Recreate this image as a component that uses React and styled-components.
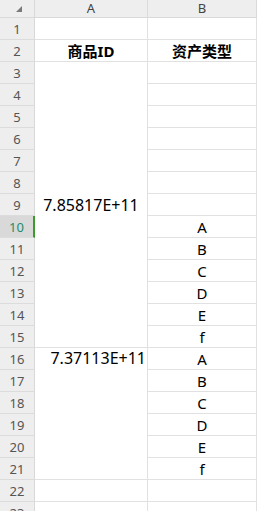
import React from "react";
import styled, { createGlobalStyle } from "styled-components";

const Global = createGlobalStyle`
  html, body { margin: 0; padding: 0; background: #fff; overflow: hidden; }
  body { font-family: "Noto Sans", "Noto Sans CJK SC", sans-serif; }
`;

const Sheet = styled.div`
  display: grid;
  grid-template-columns: 35px 113px 1fr;
  grid-template-rows: 18px repeat(23, 22px);
  width: 257px;
  height: 511px;
  overflow: hidden;
  background: #fff;
`;

const Corner = styled.div`
  background: #eeeeee;
  border-right: 1px solid #d9d9d9;
  border-bottom: 1px solid #d9d9d9;
  position: relative;
`;

const CornerMark = styled.div`
  position: absolute;
  left: 16px;
  top: 6px;
  width: 0;
  height: 0;
  border-left: 6px solid transparent;
  border-bottom: 6px solid #7a7a7a;
`;

const ColHead = styled.div`
  background: #eeeeee;
  border-right: 1px solid #dadada;
  border-bottom: 1px solid #d9d9d9;
  display: flex;
  align-items: center;
  justify-content: center;
  font-size: 13px;
  color: #444;
  line-height: 1;
`;

const RowHead = styled.div`
  background: ${(p) => (p.$active ? "#d9d9d9" : "#eeeeee")};
  color: ${(p) => (p.$active ? "#1e8c6b" : "#555")};
  border-right: ${(p) => (p.$active ? "2px solid #3c9b2a" : "1px solid #d9d9d9")};
  border-bottom: 1px solid #dcdcdc;
  display: flex;
  align-items: center;
  justify-content: center;
  font-size: 13px;
  box-sizing: border-box;
`;

const Cell = styled.div`
  border-right: 1px solid #e1e1e1;
  border-bottom: 1px solid #e1e1e1;
  display: flex;
  align-items: ${(p) => p.$valign || "center"};
  justify-content: ${(p) => p.$align || "center"};
  padding: ${(p) => p.$pad || "0"};
  font-size: ${(p) => (p.$num ? "16px" : "15px")};
  font-weight: ${(p) => (p.$bold ? 700 : 400)};
  color: #000;
  white-space: nowrap;
  overflow: hidden;
  box-sizing: border-box;
  grid-column: ${(p) => p.$col};
  grid-row: ${(p) => p.$row};
`;

const TopLine = styled.span`
  line-height: 21px;
`;

const types = ["A", "B", "C", "D", "E", "f"];

export default function App() {
  const rows = Array.from({ length: 23 }, (_, i) => i + 1);

  const colB = {};
  colB[2] = { text: "资产类型", bold: true };
  types.forEach((t, i) => {
    colB[10 + i] = { text: t };
    colB[16 + i] = { text: t };
  });

  return (
    <>
      <Global />
      <Sheet>
        <Corner>
          <CornerMark />
        </Corner>
        <ColHead>A</ColHead>
        <ColHead>B</ColHead>

        {rows.map((r) => (
          <RowHead key={`h${r}`} $active={r === 10} style={{ gridColumn: 1, gridRow: r + 1 }}>
            {r}
          </RowHead>
        ))}

        <Cell $col={2} $row={2} />
        <Cell $col={2} $row={3} $bold>
          商品ID
        </Cell>
        <Cell $col={2} $row="4 / span 13" $num>
          7.85817E+11
        </Cell>
        <Cell $col={2} $row="17 / span 6" $num $align="flex-end" $valign="flex-start" $pad="0 1px 0 0">
          <TopLine>7.37113E+11</TopLine>
        </Cell>
        <Cell $col={2} $row={23} />
        <Cell $col={2} $row={24} />

        {rows.map((r) => (
          <Cell key={`b${r}`} $col={3} $row={r + 1} $bold={colB[r]?.bold}>
            {colB[r]?.text}
          </Cell>
        ))}
      </Sheet>
    </>
  );
}
